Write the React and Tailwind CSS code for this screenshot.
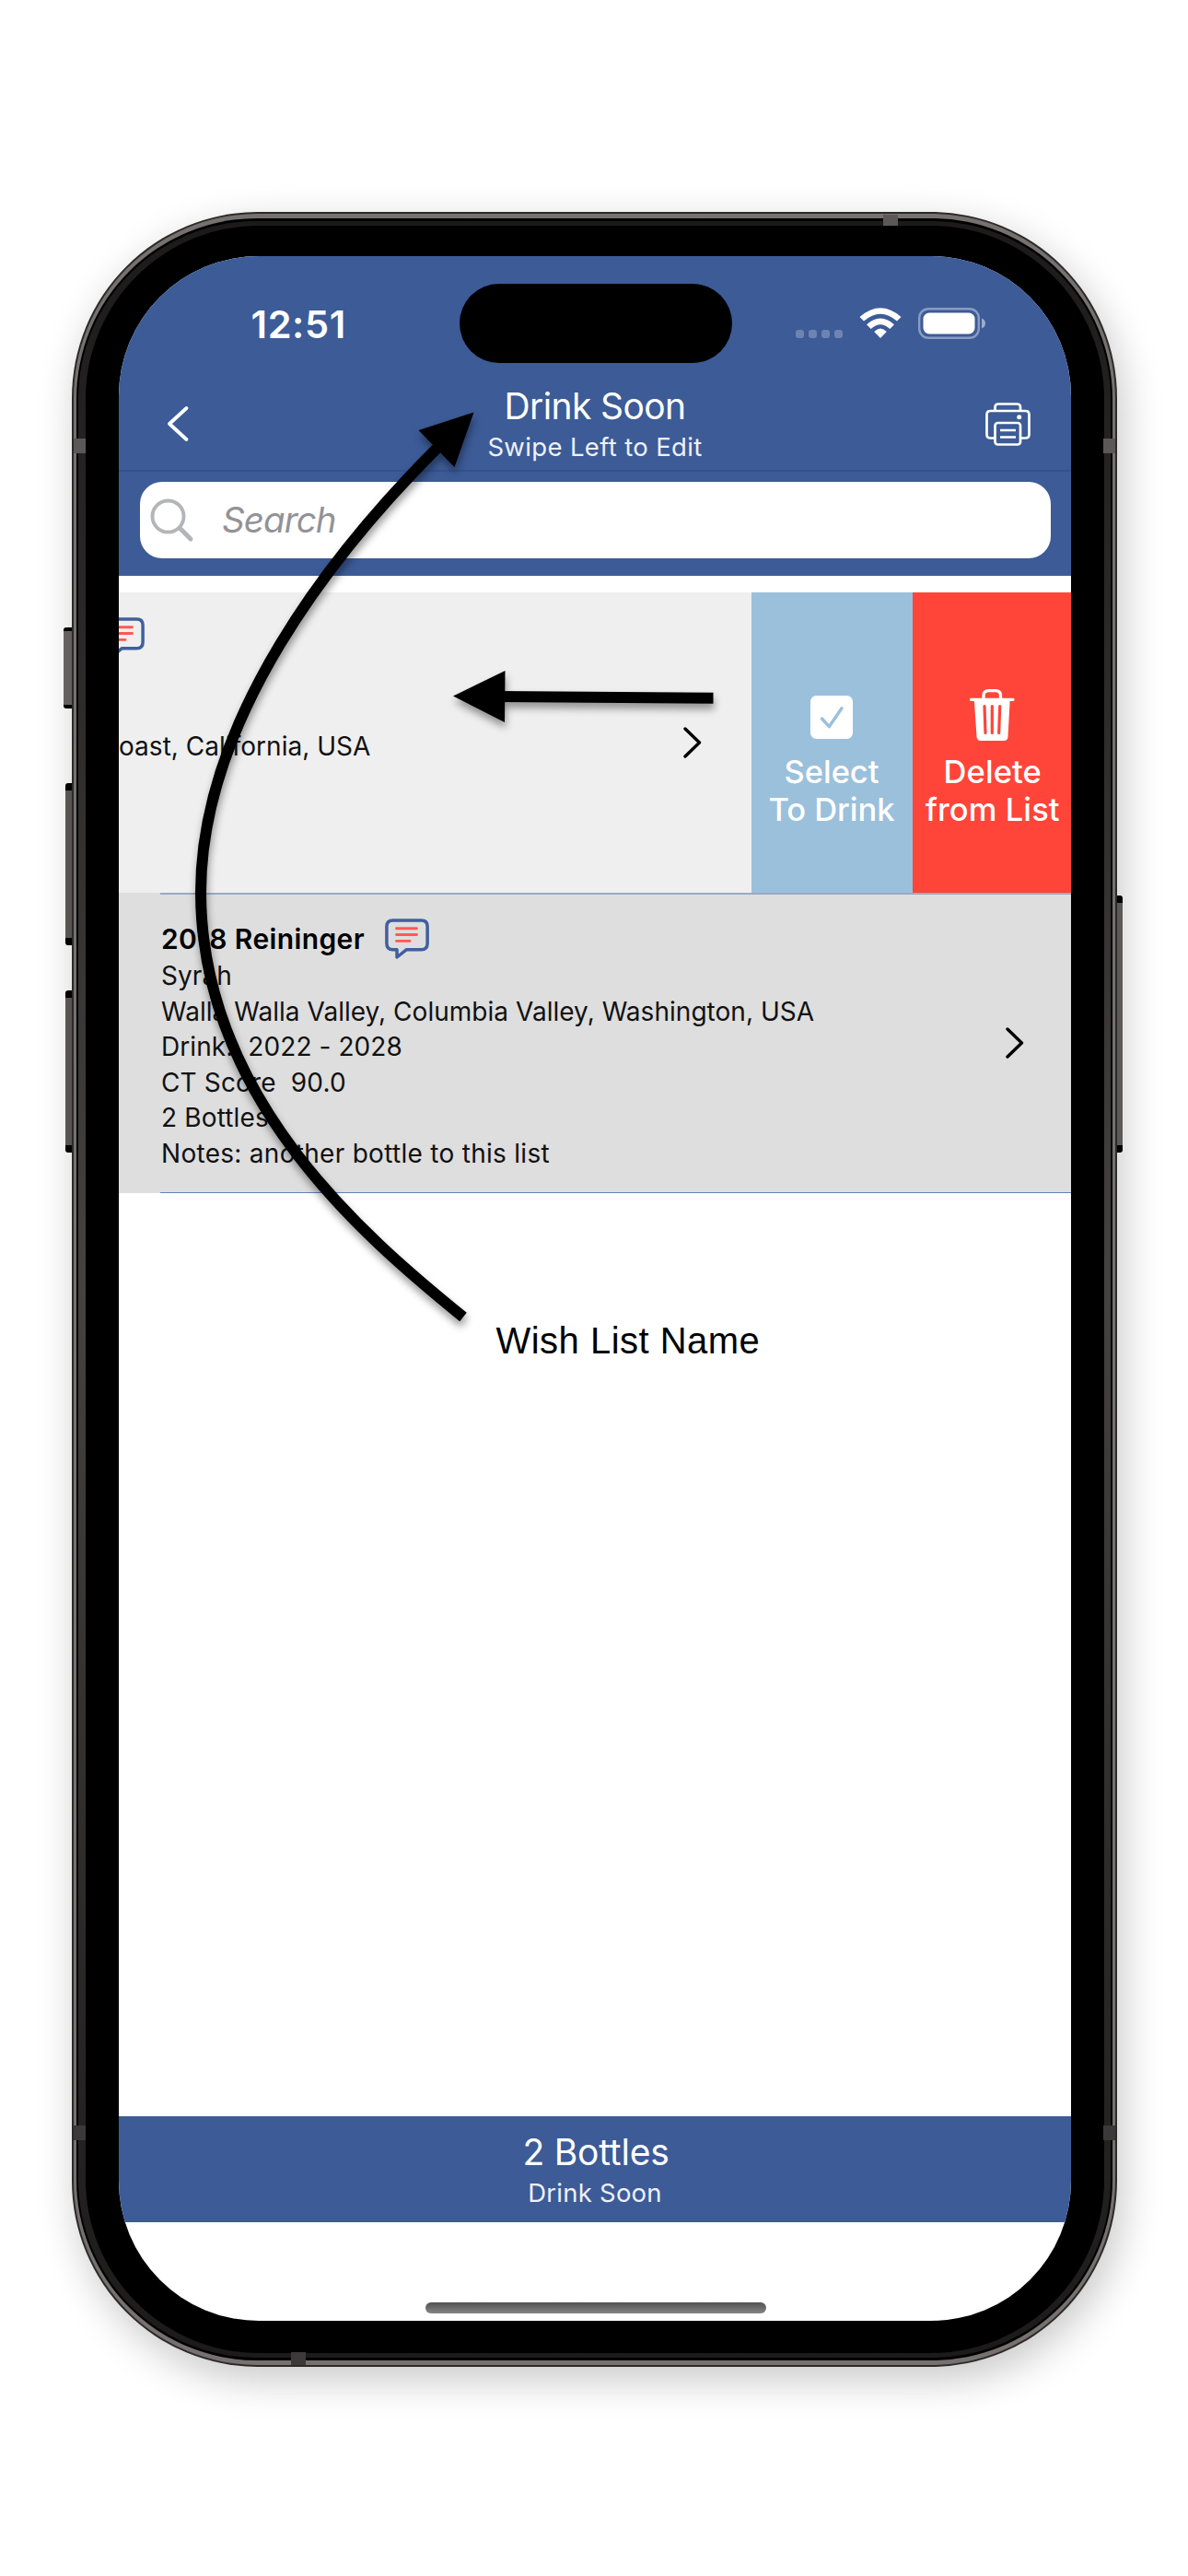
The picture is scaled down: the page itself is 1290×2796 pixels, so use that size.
const sans = "font-['Inter','Liberation_Sans',sans-serif]";

function Line({ children, className = "" }) {
  return <p className={"whitespace-pre leading-[38.6px] h-[38.6px] " + className}>{children}</p>;
}

function CommentIcon({ className = "" }) {
  return (
    <svg className={className} width="48" height="44" viewBox="0 0 48 44" fill="none">
      <path
        d="M8.500 1.900H39.500Q46.100 1.900 46.100 8.500V27Q46.100 33.700 39.500 33.700H23.500L13 42V33.700H8.500Q1.900 33.700 1.900 27V8.500Q1.900 1.900 8.500 1.900Z"
        stroke="#3f5f9f"
        strokeWidth="3.500"
        strokeLinejoin="round"
      />
      <path d="M12.500 10.700H34.500M12.500 17.500H34.500M12.500 24.400H27" stroke="#ff5a4f" strokeWidth="2.900" strokeLinecap="round" />
    </svg>
  );
}

function Chevron({ className = "" }) {
  return (
    <svg className={className} width="20" height="34" viewBox="0 0 20 34" fill="none">
      <path d="M2 2L17.500 17L2 32" stroke="#000" strokeWidth="3.400" strokeLinecap="round" strokeLinejoin="round" />
    </svg>
  );
}

function StatusBar() {
  return (
    <div className="flex h-[136px] items-start">
      <div className="ml-[143.500px] mt-[49px] w-[106px] whitespace-nowrap text-[41.500px] font-semibold leading-[50px] tracking-[0.600px] text-white">12:51</div>
      <div className="ml-[120px] mt-[30px] h-[86px] w-[296px] rounded-full bg-black" />
      <div className="ml-[69.500px] mt-[80px] flex gap-[5px]">
        {[0, 1, 2, 3].map((i) => (
          <div key={i} className="h-[9px] w-[9px] rounded-[3px] bg-[#6d84b1]" />
        ))}
      </div>
      <svg className="ml-[18px] mt-[56px]" width="46" height="34" viewBox="0 0 46 34" fill="#fff">
        <path d="M0.500 10Q23-9.500 45.500 10L41 14.600Q23-1.200 5 14.600Z" />
        <path d="M8 18.200Q23 4.800 38 18.200L33.300 23Q23 13.500 12.700 23Z" />
        <path d="M16.200 26Q23 19 29.800 26L23 33Z" />
      </svg>
      <svg className="ml-[17.500px] mt-[56px]" width="74" height="34" viewBox="0 0 74 34">
        <rect x="1.200" y="1.200" width="64.600" height="31.600" rx="10" fill="none" stroke="#8a9cc1" strokeWidth="2.400" />
        <rect x="5.500" y="5.500" width="56" height="23" rx="6.500" fill="#fff" />
        <path d="M69 11.500Q73 13 73 17T69 22.500Z" fill="#9dacca" />
      </svg>
    </div>
  );
}

function NavBar() {
  return (
    <div className="flex h-[98px] justify-between border-b-2 border-[#35528c]">
      <svg className="ml-[51.500px] mt-[26px]" width="26" height="40" viewBox="0 0 26 40" fill="none">
        <path d="M21.500 3L3 20L21.500 37" stroke="#fff" strokeWidth="3.800" strokeLinecap="round" strokeLinejoin="round" />
      </svg>
      <div className="flex flex-col items-center pl-[16px] text-white">
        <p className="mt-[3px] h-[51px] text-[39px] leading-[48px] tracking-[-0.600px]">Drink Soon</p>
        <p className="h-[34px] text-[27.500px] leading-[34px] tracking-[0.350px] text-[#eef1f7]">Swipe Left to Edit</p>
      </div>
      <svg className="mr-[44.500px] mt-[23px]" width="49" height="47" viewBox="0 0 49 47" fill="none" stroke="#fff" strokeWidth="2.700">
        <path d="M10.500 9V5Q10.500 1.500 14 1.500H34.500Q38 1.500 38 5V9" />
        <path d="M10.500 38.500H5.500Q1.500 38.500 1.500 34.500V13Q1.500 9 5.500 9H43.500Q47.500 9 47.500 13V34.500Q47.500 38.500 43.500 38.500H38" />
        <rect x="10.500" y="22" width="27.500" height="23.500" rx="3" />
        <path d="M16 30H33M16 37.500H33" strokeWidth="2.600" />
        <circle cx="36.700" cy="15.700" r="2.500" fill="#fff" stroke="none" />
      </svg>
    </div>
  );
}

function SearchBar() {
  return (
    <div className="h-[113px] px-[22.500px] pt-[11px]">
      <div className="flex h-[83px] items-center rounded-[24px] bg-white">
        <svg className="ml-[11px]" width="48" height="48" viewBox="0 0 48 48" fill="none" stroke="#b3b6b8" strokeLinecap="round">
          <circle cx="19.500" cy="19.500" r="17" strokeWidth="3.900" />
          <path d="M32.500 32.500L44 44" strokeWidth="5" />
        </svg>
        <span className="ml-[30.500px] text-[38.500px] italic tracking-[-0.900px] text-[#929297]">Search</span>
      </div>
    </div>
  );
}

function SwipedRow() {
  return (
    <div className="flex h-[326px] bg-[#efefef]">
      <div className="flex w-[686.500px] items-start">
        <div className="flex w-[613px] flex-col">
          <div className="h-[44px] w-[28px] mt-[27px] flex justify-end overflow-hidden">
            <CommentIcon className="shrink-0" />
          </div>
          <Line className="mt-[77px] text-[28px] tracking-[0.030px] text-[#111]">oast, California, USA</Line>
        </div>
        <Chevron className="mt-[146px]" />
      </div>
      <div className="flex w-[175px] flex-col items-center bg-[#9bc0db] text-[34.500px] font-medium leading-[41.800px] tracking-[-0.050px] text-white">
        <svg className="mt-[112px]" width="46" height="47" viewBox="0 0 46 47" fill="none">
          <rect width="46" height="47" rx="6.500" fill="#fff" />
          <path d="M12.500 25L20.300 33.700L34 13.700" stroke="#9bc0db" strokeWidth="3.400" strokeLinecap="round" strokeLinejoin="round" />
        </svg>
        <p className="mt-[14.500px]">Select</p>
        <p>To Drink</p>
      </div>
      <div className="flex grow flex-col items-center whitespace-nowrap bg-[#ff453a] pl-[2px] text-[34.500px] font-medium leading-[41.800px] tracking-[0.100px] text-white">
        <svg className="mt-[105px]" width="49" height="57" viewBox="0 0 49 57" fill="none">
          <path d="M15 11V7Q15 1.700 20.500 1.700H28Q33.500 1.700 33.500 7V11" stroke="#fff" strokeWidth="3.300" />
          <path d="M1.500 11.300H47" stroke="#fff" strokeWidth="3.200" strokeLinecap="round" />
          <path d="M4.800 11H43.700L41.500 51.500Q41.200 56 37 56H12Q7.800 56 7.500 51.500Z" fill="#fff" />
          <path d="M16 18.500L17 47.500M24.300 18.500V47.500M32.700 18.500L31.700 47.500" stroke="#ff453a" strokeWidth="3.200" strokeLinecap="round" />
        </svg>
        <p className="mt-[11.500px]">Delete</p>
        <p>from List</p>
      </div>
    </div>
  );
}

function BottleRow() {
  return (
    <div className="h-[326px] bg-[#dedede]">
      <div className="ml-[45px] h-[326px] border-b-[1.500px] border-t-2 border-b-[#6281bc] border-t-[#9aa9c6] pl-[1px]">
        <div className="flex justify-between">
          <div className="text-[28px] tracking-[0.080px] text-[#111]">
            <div className="flex h-[67px] pt-[26px]">
              <Line className="mt-[2.500px] w-[243px] text-[30px] font-semibold tracking-[0.380px] text-black">2018 Reininger</Line>
              <CommentIcon className="shrink-0" />
            </div>
            <div className="mt-[2px]">
              <Line>Syrah</Line>
              <Line className="tracking-[0.030px]">Walla Walla Valley, Columbia Valley, Washington, USA</Line>
              <Line>Drink:  2022 - 2028</Line>
              <Line className="tracking-[0.150px]">CT Score  90.0</Line>
              <Line className="tracking-[0.150px]">2 Bottles</Line>
              <Line className="tracking-[0.290px]">Notes: another bottle to this list</Line>
            </div>
          </div>
          <Chevron className="mr-[51.500px] mt-[144px]" />
        </div>
      </div>
    </div>
  );
}

function Screen() {
  return (
    <div className={"flex h-[2241px] w-[1034px] flex-col overflow-hidden rounded-[152px] bg-white " + sans}>
      <div className="bg-[#3c5b97]">
        <StatusBar />
        <NavBar />
        <SearchBar />
      </div>
      <div className="mt-[18px]">
        <SwipedRow />
        <BottleRow />
      </div>
      <div className="grow">
        <p className="ml-[409.500px] mt-[137px] text-[40px] leading-[46px] tracking-[0.480px] text-black font-['Liberation_Sans',Arial,sans-serif]">Wish List Name</p>
      </div>
      <div className="flex h-[115px] flex-col items-center bg-[#3c5b97] text-white">
        <p className="mt-[15px] h-[51px] pl-[2px] text-[39px] leading-[48px] tracking-[-0.200px]">2 Bottles</p>
        <p className="text-[27.500px] leading-[34px] tracking-[0.250px] text-[#eef1f7]">Drink Soon</p>
      </div>
      <div className="flex h-[107px] items-end justify-center pb-[8px] pl-[2px]">
        <div className="h-[12px] w-[370px] rounded-full bg-linear-to-b from-[#525252] to-[#858585]" />
      </div>
    </div>
  );
}

function Arrows() {
  return (
    <svg className="pointer-events-none absolute left-0 top-0 drop-shadow-[1px_6px_4px_rgba(0,0,0,0.4)]" width="1290" height="1500" viewBox="0 0 1290 1500" fill="none">
      <path d="M480 481L474 487C364 597 217.500 780 218 970C219.500 1192 394 1341 503 1429.500" stroke="#000" strokeWidth="12" />
      <path d="M514.500 447.500L454.500 467L493.500 507Z" fill="#000" />
      <path d="M540 756L774.500 757.700" stroke="#000" strokeWidth="12" />
      <path d="M492 755.500L548.500 728L548 784Z" fill="#000" />
    </svg>
  );
}

export default function App() {
  return (
    <div className="relative h-[2796px] w-[1290px] overflow-hidden bg-white pt-[230px]">
      <div className="relative ml-[78px] h-[2339px] w-[1135px]">
        <div className="absolute left-[-9px] top-[451px] h-[88px] w-[12px] rounded-[3px] border-y-4 border-black bg-[#6e6868]" />
        <div className="absolute left-[-7px] top-[620px] h-[176px] w-[12px] rounded-[3px] border-y-8 border-black bg-[#5f5b58]" />
        <div className="absolute left-[-7px] top-[845px] h-[176px] w-[12px] rounded-[3px] border-y-8 border-black bg-[#5f5b58]" />
        <div className="absolute right-[-6px] top-[742px] h-[279px] w-[12px] rounded-[3px] border-y-8 border-black bg-[#6a6664]" />
        <div className="relative h-[2339px] w-[1135px] rounded-[202px] bg-[#2c2a29] px-[2px] py-[2px] shadow-[6px_14px_44px_rgba(0,0,0,0.22)]">
          <div className="h-full rounded-[200px] bg-[#767170] px-[3px] py-[5px]">
            <div className="h-full rounded-[196px] bg-black px-[2px] py-[3px]">
              <div className="h-full rounded-[193px] bg-linear-to-b from-[#1c1a1a] via-[#454241] to-[#1c1a1a] px-[7.500px] py-[5px]">
                <div className="h-full rounded-[188px] bg-black pl-[36.500px] pt-[33px]">
                  <Screen />
                </div>
              </div>
            </div>
          </div>
          <div className="absolute left-[881px] top-[3px] h-[12px] w-[16px] bg-[#5c5858]" />
          <div className="absolute left-[238px] bottom-[2px] h-[14px] w-[16px] bg-[#3b3939]" />
          <div className="absolute left-[2px] top-[246px] h-[16px] w-[13px] bg-[#5c5858]" />
          <div className="absolute right-[2px] top-[246px] h-[16px] w-[13px] bg-[#5c5858]" />
          <div className="absolute left-[2px] top-[2077px] h-[16px] w-[13px] bg-[#3b3939]" />
          <div className="absolute right-[2px] top-[2077px] h-[16px] w-[13px] bg-[#3b3939]" />
        </div>
      </div>
      <Arrows />
    </div>
  );
}
